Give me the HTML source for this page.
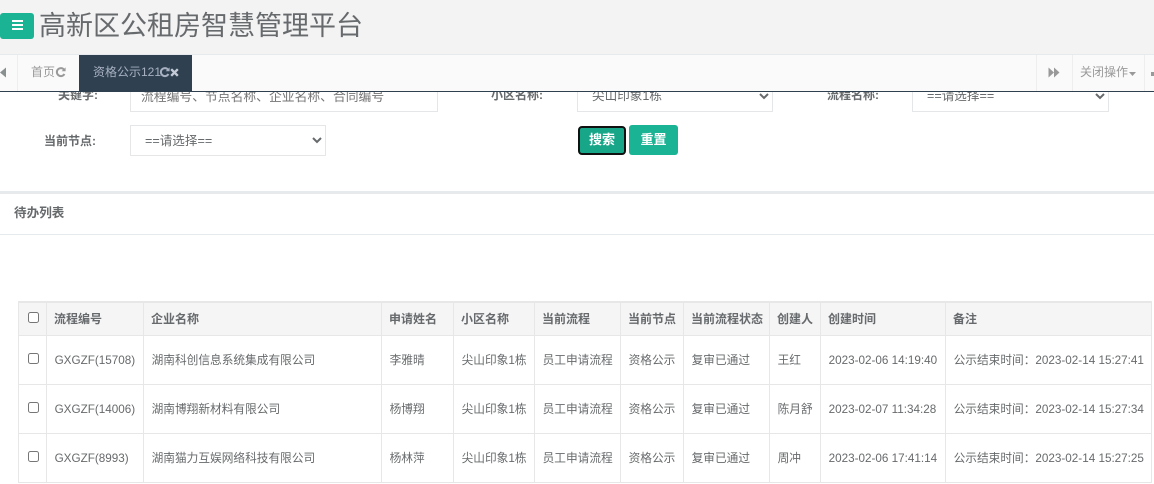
<!DOCTYPE html>
<html lang="zh">
<head>
<meta charset="utf-8">
<title>高新区公租房智慧管理平台</title>
<style>
*{box-sizing:border-box}
html,body{margin:0;padding:0}
body{width:1154px;height:484px;overflow:hidden;position:relative;background:#fff;color:#676a6c;font:12px/1.4 "Liberation Sans","Noto Sans CJK SC",sans-serif}
.a{position:absolute;white-space:nowrap}
.lbl{font-weight:bold;font-size:12px;line-height:18px;color:#676a6c;text-align:right}
.field{position:absolute;border:1px solid #e5e6e7;background:#fff;color:#676a6c;font:12.6px "Liberation Sans","Noto Sans CJK SC",sans-serif;border-radius:0;padding:0 10px;margin:0}
input.field{font-size:12.8px}
table{position:absolute;left:18px;top:301px;width:1134px;border-collapse:collapse;table-layout:fixed;border-top:2px solid #e7e7e7;border-left:1px solid #e7e7e7}
th,td{border:1px solid #e7e7e7;text-align:left;white-space:nowrap;overflow:hidden;font-size:11.7px;vertical-align:middle}
td{height:49px;padding:3px 0 0 7.6px}
th{height:33px;background:#f5f5f6;font-weight:bold;font-size:12px;padding:1px 0 0 7px}
th:first-child{padding:0;text-align:center}
td:first-child{padding:2px 0 0;text-align:center}
input[type=checkbox]{margin:0 0 3px 1px;width:11px;height:11px;vertical-align:middle}
.ic{position:absolute;display:block}
</style>
</head>
<body>
<div class="lbl a" style="left:44px;top:86px;width:54px">关键字:</div>
<input class="field" style="left:130px;top:80px;width:308px;height:32px" placeholder="流程编号、节点名称、企业名称、合同编号">
<div class="lbl a" style="left:480px;top:86px;width:63px">小区名称:</div>
<select class="field" style="left:577px;top:80px;width:196px;height:32px"><option>尖山印象1栋</option></select>
<div class="lbl a" style="left:815px;top:86px;width:64px">流程名称:</div>
<select class="field" style="left:912px;top:80px;width:197px;height:32px"><option>==请选择==</option></select>
<div class="lbl a" style="left:33px;top:132px;width:63px">当前节点:</div>
<select class="field" style="left:130px;top:125px;width:196px;height:31px"><option>==请选择==</option></select>

<div class="a" style="left:578px;top:126px;width:48px;height:29px;background:#18a689;border:2px solid #111;border-radius:4px;color:#fff;font-weight:bold;font-size:13px;text-align:center;line-height:23px">搜索</div>
<div class="a" style="left:629px;top:125px;width:49px;height:30px;background:#1ab394;border-radius:3px;color:#fff;font-weight:bold;font-size:13px;text-align:center;line-height:30px">重置</div>

<div class="a" style="left:0;top:191px;width:1154px;height:3px;background:#e7eaec"></div>
<div class="a" style="left:14px;top:205px;font-weight:bold;font-size:12.6px;line-height:17px">待办列表</div>
<div class="a" style="left:0;top:234px;width:1154px;height:1px;background:#e7eaec"></div>

<table>
<colgroup><col style="width:28px"><col style="width:97px"><col style="width:238px"><col style="width:72px"><col style="width:81px"><col style="width:86px"><col style="width:63px"><col style="width:86px"><col style="width:51px"><col style="width:125px"><col style="width:206px"></colgroup>
<tr><th><input type="checkbox"></th><th>流程编号</th><th>企业名称</th><th>申请姓名</th><th>小区名称</th><th>当前流程</th><th>当前节点</th><th>当前流程状态</th><th>创建人</th><th>创建时间</th><th>备注</th></tr>
<tr><td><input type="checkbox"></td><td>GXGZF(15708)</td><td>湖南科创信息系统集成有限公司</td><td>李雅晴</td><td>尖山印象1栋</td><td>员工申请流程</td><td>资格公示</td><td>复审已通过</td><td>王红</td><td>2023-02-06 14:19:40</td><td>公示结束时间&#xFF1A;2023-02-14 15:27:41</td></tr>
<tr><td><input type="checkbox"></td><td>GXGZF(14006)</td><td>湖南博翔新材料有限公司</td><td>杨博翔</td><td>尖山印象1栋</td><td>员工申请流程</td><td>资格公示</td><td>复审已通过</td><td>陈月舒</td><td>2023-02-07 11:34:28</td><td>公示结束时间&#xFF1A;2023-02-14 15:27:34</td></tr>
<tr><td><input type="checkbox"></td><td>GXGZF(8993)</td><td>湖南猫力互娱网络科技有限公司</td><td>杨林萍</td><td>尖山印象1栋</td><td>员工申请流程</td><td>资格公示</td><td>复审已通过</td><td>周冲</td><td>2023-02-06 17:41:14</td><td>公示结束时间&#xFF1A;2023-02-14 15:27:25</td></tr>
</table>

<!-- top header -->
<div class="a" style="left:0;top:0;width:1154px;height:54px;background:#f3f3f4"></div>
<div class="a" style="left:0;top:13px;width:34px;height:26px;background:#1ab394;border-radius:3px"></div>
<div class="a" style="left:12px;top:20px;width:11px;height:2px;background:#fff"></div>
<div class="a" style="left:12px;top:24px;width:11px;height:2px;background:#fff"></div>
<div class="a" style="left:12px;top:28px;width:11px;height:2px;background:#fff"></div>
<div class="a" style="left:39px;top:7px;font-size:27px;line-height:38px;color:#676a6c">高新区公租房智慧管理平台</div>

<!-- tab bar -->
<div class="a" style="left:0;top:54px;width:1154px;height:38px;background:#fafafa;border-top:1px solid #e7eaec;border-bottom:1px solid #2f4050"></div>
<div class="a" style="left:17px;top:55px;width:1px;height:36px;background:#eee"></div>
<svg class="ic" style="left:0;top:67px" width="7" height="11" viewBox="0 0 7 11"><path d="M6 0.5V10.5L0 5.5Z" fill="#8a8f8f"/></svg>
<div class="a" style="left:31px;top:64px;line-height:17px;color:#999">首页</div>
<svg class="ic" style="left:55px;top:67px" width="11" height="11" viewBox="0 0 11 11"><path d="M9 2.6A4 4 0 1 0 9.4 7" fill="none" stroke="#999" stroke-width="2"/><path d="M6.6 4.2H10.6V0.4Z" fill="#999"/></svg>
<div class="a" style="left:79px;top:55px;width:113px;height:36px;background:#2f4050"></div>
<div class="a" style="left:93px;top:64px;line-height:17px;color:#a7b1c2">资格公示121</div>
<svg class="ic" style="left:159px;top:67px" width="11" height="11" viewBox="0 0 11 11"><path d="M9 2.6A4 4 0 1 0 9.4 7" fill="none" stroke="#a7b1c2" stroke-width="2"/><path d="M6.6 4.2H10.6V0.4Z" fill="#a7b1c2"/></svg>
<svg class="ic" style="left:170px;top:68px" width="9" height="9" viewBox="0 0 9 9"><path d="M1.2 1.2L7.8 7.8M7.8 1.2L1.2 7.8" stroke="#c4cbd6" stroke-width="2.4"/></svg>

<div class="a" style="left:1036px;top:55px;width:1px;height:36px;background:#eee"></div>
<svg class="ic" style="left:1048px;top:67px" width="12" height="11" viewBox="0 0 12 11"><path d="M0.5 0.5V10.5L6 5.5ZM6 0.5V10.5L11.5 5.5Z" fill="#999"/></svg>
<div class="a" style="left:1072px;top:55px;width:1px;height:36px;background:#eee"></div>
<div class="a" style="left:1080px;top:64px;line-height:17px;color:#999">关闭操作</div>
<svg class="ic" style="left:1129px;top:72px" width="7" height="4" viewBox="0 0 7 4"><path d="M0 0H7L3.5 4Z" fill="#999"/></svg>
<div class="a" style="left:1144px;top:55px;width:1px;height:36px;background:#eee"></div>
<div class="a" style="left:1151px;top:72px;width:3px;height:4px;background:#999"></div>
</body>
</html>
